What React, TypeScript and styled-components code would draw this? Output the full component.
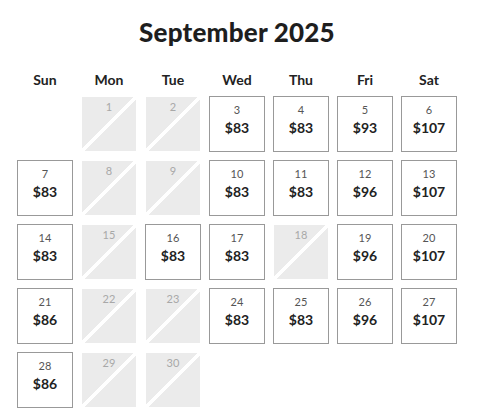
import styled, { createGlobalStyle } from 'styled-components';

interface Day {
  date: number;
  price?: number;
}

const GlobalStyle = createGlobalStyle`
  body {
    margin: 0;
    background: #ffffff;
    font-family: Lato, 'Noto Sans', sans-serif;
  }
`;

const Calendar = styled.div`
  width: 440px;
  margin-left: 17px;
  padding-top: 16px;
`;

const Title = styled.h1`
  margin: 0;
  height: 32px;
  line-height: 32px;
  text-align: center;
  font-size: 26px;
  font-weight: 900;
  color: #1e1e1e;
  letter-spacing: 0.2px;
`;

const Week = styled.div`
  display: grid;
  grid-template-columns: repeat(7, 56px);
  column-gap: 8px;
  margin-top: 16px;
  height: 32px;
`;

const DayName = styled.div`
  text-align: center;
  font-size: 14px;
  font-weight: 700;
  color: #222;
  line-height: 32px;
`;

const Grid = styled.div`
  display: grid;
  grid-template-columns: repeat(7, 56px);
  grid-auto-rows: 56px;
  gap: 8px;
`;

const Cell = styled.div<{ $open: boolean }>`
  box-sizing: border-box;
  border: 1px solid ${(p) => (p.$open ? '#999' : 'transparent')};
  background: ${(p) =>
    p.$open
      ? '#fff'
      : 'linear-gradient(to bottom right, #ebebeb 48%, #fff 48%, #fff 52%, #ebebeb 52%)'};
  background-clip: padding-box;
  display: flex;
  flex-direction: column;
  align-items: center;
  padding-top: ${(p) => (p.$open ? '6px' : '3px')};
`;

const DateNum = styled.span<{ $open: boolean }>`
  font-size: 11px;
  line-height: 14px;
  color: ${(p) => (p.$open ? '#555' : '#a8a8a8')};
`;

const Price = styled.span`
  font-size: 14px;
  font-weight: 700;
  line-height: 18px;
  color: #222;
  margin-top: 2px;
`;

const names = ['Sun', 'Mon', 'Tue', 'Wed', 'Thu', 'Fri', 'Sat'];

const prices: Record<number, number> = {
  3: 83, 4: 83, 5: 93, 6: 107,
  7: 83, 10: 83, 11: 83, 12: 96, 13: 107,
  14: 83, 16: 83, 17: 83, 19: 96, 20: 107,
  21: 86, 24: 83, 25: 83, 26: 96, 27: 107,
  28: 86,
};

const days: Day[] = Array.from({ length: 30 }, (_, i) => ({
  date: i + 1,
  price: prices[i + 1],
}));

export default function App() {
  return (
    <>
      <GlobalStyle />
      <Calendar>
        <Title>September 2025</Title>
        <Week>
          {names.map((n) => (
            <DayName key={n}>{n}</DayName>
          ))}
        </Week>
        <Grid>
          <div />
          {days.map((d) => {
            const open = d.price !== undefined;
            return (
              <Cell key={d.date} $open={open}>
                <DateNum $open={open}>{d.date}</DateNum>
                {open && <Price>${d.price}</Price>}
              </Cell>
            );
          })}
        </Grid>
      </Calendar>
    </>
  );
}
